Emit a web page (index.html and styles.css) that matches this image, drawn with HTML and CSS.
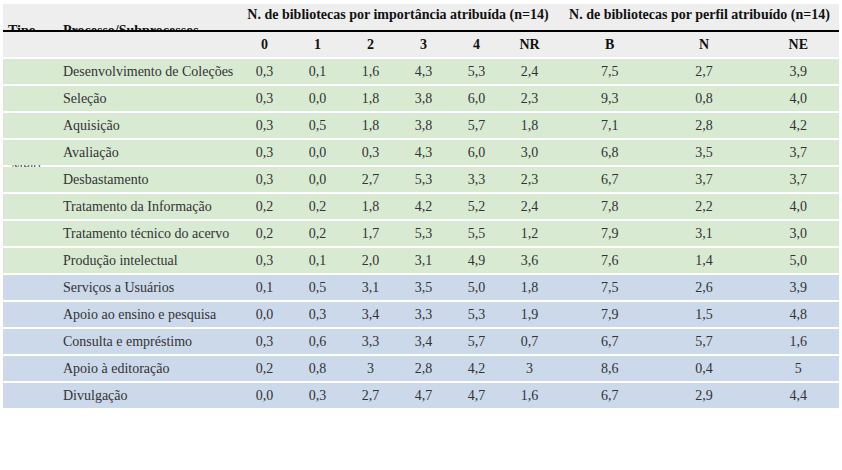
FILE: index.html
```html
<!DOCTYPE html>
<html lang="pt">
<head>
<meta charset="utf-8">
<title>Tabela</title>
<link rel="stylesheet" href="styles.css">
</head>
<body>
<div class="table">
  <div class="head">
    <div class="row row-top">
      <div class="cell clip"><span class="clip-text">Tipo</span></div>
      <div class="cell clip"><span class="clip-text">Processo/Subprocessos</span></div>
      <div class="cell group g1">N. de bibliotecas por importância atribuída (n=14)</div>
      <div class="cell group g2">N. de bibliotecas por perfil atribuído (n=14)</div>
    </div>
    <div class="row row-sub">
      <div class="cell"></div>
      <div class="cell"></div>
      <div class="cell num">0</div>
      <div class="cell num">1</div>
      <div class="cell num">2</div>
      <div class="cell num">3</div>
      <div class="cell num">4</div>
      <div class="cell num">NR</div>
      <div class="cell num wide">B</div>
      <div class="cell num wide">N</div>
      <div class="cell num wide">NE</div>
    </div>
  </div>
  <div class="body">
    <div class="row green"><div class="cell"></div><div class="cell name">Desenvolvimento de Coleções</div><div class="cell num">0,3</div><div class="cell num">0,1</div><div class="cell num">1,6</div><div class="cell num">4,3</div><div class="cell num">5,3</div><div class="cell num">2,4</div><div class="cell num wide">7,5</div><div class="cell num wide">2,7</div><div class="cell num wide">3,9</div></div>
    <div class="gap"></div>
    <div class="row green"><div class="cell"></div><div class="cell name">Seleção</div><div class="cell num">0,3</div><div class="cell num">0,0</div><div class="cell num">1,8</div><div class="cell num">3,8</div><div class="cell num">6,0</div><div class="cell num">2,3</div><div class="cell num wide">9,3</div><div class="cell num wide">0,8</div><div class="cell num wide">4,0</div></div>
    <div class="gap"></div>
    <div class="row green"><div class="cell"></div><div class="cell name">Aquisição</div><div class="cell num">0,3</div><div class="cell num">0,5</div><div class="cell num">1,8</div><div class="cell num">3,8</div><div class="cell num">5,7</div><div class="cell num">1,8</div><div class="cell num wide">7,1</div><div class="cell num wide">2,8</div><div class="cell num wide">4,2</div></div>
    <div class="gap"></div>
    <div class="row green"><div class="cell"></div><div class="cell name">Avaliação</div><div class="cell num">0,3</div><div class="cell num">0,0</div><div class="cell num">0,3</div><div class="cell num">4,3</div><div class="cell num">6,0</div><div class="cell num">3,0</div><div class="cell num wide">6,8</div><div class="cell num wide">3,5</div><div class="cell num wide">3,7</div></div>
    <div class="gap"><span class="gap-text">Meio</span></div>
    <div class="row green"><div class="cell"></div><div class="cell name">Desbastamento</div><div class="cell num">0,3</div><div class="cell num">0,0</div><div class="cell num">2,7</div><div class="cell num">5,3</div><div class="cell num">3,3</div><div class="cell num">2,3</div><div class="cell num wide">6,7</div><div class="cell num wide">3,7</div><div class="cell num wide">3,7</div></div>
    <div class="gap"></div>
    <div class="row green"><div class="cell"></div><div class="cell name">Tratamento da Informação</div><div class="cell num">0,2</div><div class="cell num">0,2</div><div class="cell num">1,8</div><div class="cell num">4,2</div><div class="cell num">5,2</div><div class="cell num">2,4</div><div class="cell num wide">7,8</div><div class="cell num wide">2,2</div><div class="cell num wide">4,0</div></div>
    <div class="gap"></div>
    <div class="row green"><div class="cell"></div><div class="cell name">Tratamento técnico do acervo</div><div class="cell num">0,2</div><div class="cell num">0,2</div><div class="cell num">1,7</div><div class="cell num">5,3</div><div class="cell num">5,5</div><div class="cell num">1,2</div><div class="cell num wide">7,9</div><div class="cell num wide">3,1</div><div class="cell num wide">3,0</div></div>
    <div class="gap"></div>
    <div class="row green"><div class="cell"></div><div class="cell name">Produção intelectual</div><div class="cell num">0,3</div><div class="cell num">0,1</div><div class="cell num">2,0</div><div class="cell num">3,1</div><div class="cell num">4,9</div><div class="cell num">3,6</div><div class="cell num wide">7,6</div><div class="cell num wide">1,4</div><div class="cell num wide">5,0</div></div>
    <div class="gap"></div>
    <div class="row blue"><div class="cell"></div><div class="cell name">Serviços a Usuários</div><div class="cell num">0,1</div><div class="cell num">0,5</div><div class="cell num">3,1</div><div class="cell num">3,5</div><div class="cell num">5,0</div><div class="cell num">1,8</div><div class="cell num wide">7,5</div><div class="cell num wide">2,6</div><div class="cell num wide">3,9</div></div>
    <div class="gap"></div>
    <div class="row blue"><div class="cell"></div><div class="cell name">Apoio ao ensino e pesquisa</div><div class="cell num">0,0</div><div class="cell num">0,3</div><div class="cell num">3,4</div><div class="cell num">3,3</div><div class="cell num">5,3</div><div class="cell num">1,9</div><div class="cell num wide">7,9</div><div class="cell num wide">1,5</div><div class="cell num wide">4,8</div></div>
    <div class="gap"></div>
    <div class="row blue"><div class="cell"></div><div class="cell name">Consulta e empréstimo</div><div class="cell num">0,3</div><div class="cell num">0,6</div><div class="cell num">3,3</div><div class="cell num">3,4</div><div class="cell num">5,7</div><div class="cell num">0,7</div><div class="cell num wide">6,7</div><div class="cell num wide">5,7</div><div class="cell num wide">1,6</div></div>
    <div class="gap"></div>
    <div class="row blue"><div class="cell"></div><div class="cell name">Apoio à editoração</div><div class="cell num">0,2</div><div class="cell num">0,8</div><div class="cell num">3</div><div class="cell num">2,8</div><div class="cell num">4,2</div><div class="cell num">3</div><div class="cell num wide">8,6</div><div class="cell num wide">0,4</div><div class="cell num wide">5</div></div>
    <div class="gap"></div>
    <div class="row blue"><div class="cell"></div><div class="cell name">Divulgação</div><div class="cell num">0,0</div><div class="cell num">0,3</div><div class="cell num">2,7</div><div class="cell num">4,7</div><div class="cell num">4,7</div><div class="cell num">1,6</div><div class="cell num wide">6,7</div><div class="cell num wide">2,9</div><div class="cell num wide">4,4</div></div>
  </div>
</div>
</body>
</html>
```

FILE: styles.css
```css
html, body {
  margin: 0;
  padding: 0;
  background: #ffffff;
}

body {
  font-family: "Liberation Serif", "Times New Roman", serif;
  font-size: 14px;
  color: #333333;
}

.table {
  padding: 4px 3px 0 3px;
  width: 836px;
}

.head {
  display: flex;
  flex-direction: column;
}

.row {
  display: grid;
  grid-template-columns: 55px 180px repeat(6, 53px) repeat(3, 1fr);
  height: 25px;
}

.row-top {
  height: 26px;
  background: #eeeeee;
  border-bottom: 2px solid #000000;
}

.row-sub {
  background: #eeeeee;
  margin-bottom: 2px;
  font-weight: bold;
  color: #111111;
}

.cell {
  display: flex;
  align-items: center;
  white-space: nowrap;
  line-height: 16px;
}

.clip {
  height: 26px;
  overflow: hidden;
  align-items: flex-start;
  padding-left: 5px;
}

.clip-text {
  padding-top: 19px;
  font-weight: bold;
  color: #111111;
}

.group {
  align-items: flex-start;
  padding-top: 3px;
  font-weight: bold;
  color: #111111;
  justify-content: center;
}

.g1 {
  grid-column: span 6;
  padding-left: 2px;
}

.g2 {
  grid-column: span 3;
  padding-left: 4px;
}

.num {
  justify-content: center;
}

.wide {
  padding-left: 13px;
}

.name {
  padding-left: 5px;
}

.green {
  background: #d9ead3;
}

.blue {
  background: #ccd9ea;
}

.gap {
  height: 2px;
  overflow: hidden;
  padding-left: 8px;
}

.gap-text {
  display: block;
  margin-top: -7px;
  line-height: 16px;
  color: #555555;
}
```
